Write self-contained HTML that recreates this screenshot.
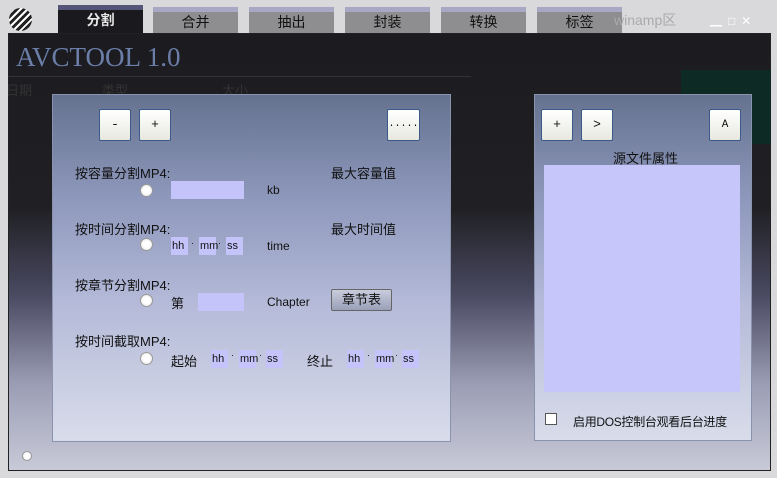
<!DOCTYPE html>
<html><head><meta charset="utf-8"><style>
*{margin:0;padding:0;box-sizing:border-box}
body{width:777px;height:478px;overflow:hidden;background:#d9d9dc;position:relative;font-family:"Liberation Sans","Noto Sans CJK SC",sans-serif;font-size:12px;color:#111}
.a{position:absolute}
.win{left:8px;top:33px;width:763px;height:438px;border:1px solid #222;background:linear-gradient(#1c1c20 0%,#202024 40%,#4a4a62 60%,#9a9cb4 80%,#c8cad8 100%)}
.tab{top:7px;width:85px;height:26px;background:#8e8e90;border-top:5px solid #a9a8c4;text-align:center;font-size:14px;line-height:20px;color:#111}
.tab.act{top:5px;height:28px;background:#1a1a1e;border-top:5px solid #55557a;color:#e8e8e8;font-weight:bold}
.panel{border:1px solid #8a93ad}
.btn{width:32px;height:32px;background:linear-gradient(#fff,#e8e8e0);border:1px solid #3a5a88;border-radius:2px;text-align:center;line-height:30px;font-family:"Liberation Mono",monospace;font-size:13px}
.inp{background:#c4c4fa;line-height:18px;font-size:11px;padding-left:1px}
.rad{width:13px;height:13px;border-radius:50%;background:radial-gradient(#fff 40%,#ddd);border:1px solid #999}
.lbl{font-size:13px}
.faint{font-size:13px}
</style></head><body>
<div class="a" style="left:9px;top:8px;width:23px;height:23px;border-radius:50%;background:repeating-linear-gradient(135deg,#222 0 3px,#fff 3px 5px)"></div>
<div class="a tab act" style="left:58px">分割</div>
<div class="a tab" style="left:153px">合并</div>
<div class="a tab" style="left:249px">抽出</div>
<div class="a tab" style="left:345px">封装</div>
<div class="a tab" style="left:441px">转换</div>
<div class="a tab" style="left:537px">标签</div>
<div class="a" style="left:614px;top:10px;font-size:14px;color:#aaa">winamp区</div>
<div class="a" style="left:710px;top:12px;color:#fff;font-size:12px;letter-spacing:6px">▁□✕</div>
<div class="a win"></div>
<div class="a" style="left:16px;top:42px;font-family:'Liberation Serif',serif;font-size:27px;color:#6a7ea8">AVCTOOL 1.0</div>
<div class="a" style="left:8px;top:76px;width:463px;height:1px;background:#333"></div>
<div class="a faint" style="left:6px;top:80px;color:#333">日期</div>
<div class="a faint" style="left:102px;top:80px;color:#333">类型</div>
<div class="a faint" style="left:222px;top:80px;color:#333">大小</div>
<div class="a" style="left:681px;top:70px;width:90px;height:74px;background:#0e2a24"></div>
<!-- left panel -->
<div class="a panel" style="left:52px;top:94px;width:399px;height:348px;background:linear-gradient(#65728f,#8e98bc 30%,#b4bad8 60%,#d8dcea 100%)"></div>
<div class="a btn" style="left:99px;top:109px">-</div>
<div class="a btn" style="left:139px;top:109px">+</div>
<div class="a btn" style="left:387px;top:109px;width:33px;font-size:10px">.....</div>
<div class="a lbl" style="left:75px;top:163px">按容量分割MP4:</div>
<div class="a lbl" style="left:331px;top:163px">最大容量值</div>
<div class="a rad" style="left:140px;top:184px"></div>
<div class="a inp" style="left:171px;top:181px;width:73px;height:18px"></div>
<div class="a" style="left:267px;top:183px">kb</div>
<div class="a lbl" style="left:75px;top:219px">按时间分割MP4:</div>
<div class="a lbl" style="left:331px;top:219px">最大时间值</div>
<div class="a rad" style="left:140px;top:238px"></div>
<div class="a inp" style="left:171px;top:237px;width:17px;height:18px">hh</div>
<div class="a" style="left:191px;top:238px;font-size:9px">·</div>
<div class="a inp" style="left:199px;top:237px;width:17px;height:18px">mm</div>
<div class="a" style="left:218px;top:238px;font-size:9px">·</div>
<div class="a inp" style="left:226px;top:237px;width:17px;height:18px">ss</div>
<div class="a" style="left:267px;top:239px">time</div>
<div class="a lbl" style="left:75px;top:275px">按章节分割MP4:</div>
<div class="a rad" style="left:140px;top:294px"></div>
<div class="a lbl" style="left:171px;top:293px">第</div>
<div class="a inp" style="left:198px;top:293px;width:46px;height:18px"></div>
<div class="a" style="left:267px;top:295px">Chapter</div>
<div class="a" style="left:331px;top:289px;width:61px;height:22px;border:1px solid #666;border-radius:2px;background:linear-gradient(#c8ccdc,#9aa0b8);text-align:center;line-height:20px;font-size:13px">章节表</div>
<div class="a lbl" style="left:75px;top:331px">按时间截取MP4:</div>
<div class="a rad" style="left:140px;top:352px"></div>
<div class="a lbl" style="left:171px;top:351px">起始</div>
<div class="a inp" style="left:211px;top:350px;width:17px;height:18px">hh</div>
<div class="a" style="left:231px;top:350px;font-size:9px">·</div>
<div class="a inp" style="left:239px;top:350px;width:17px;height:18px">mm</div>
<div class="a" style="left:259px;top:350px;font-size:9px">·</div>
<div class="a inp" style="left:266px;top:350px;width:17px;height:18px">ss</div>
<div class="a lbl" style="left:307px;top:351px">终止</div>
<div class="a inp" style="left:347px;top:350px;width:17px;height:18px">hh</div>
<div class="a" style="left:367px;top:350px;font-size:9px">·</div>
<div class="a inp" style="left:375px;top:350px;width:17px;height:18px">mm</div>
<div class="a" style="left:395px;top:350px;font-size:9px">·</div>
<div class="a inp" style="left:402px;top:350px;width:17px;height:18px">ss</div>
<div class="a rad" style="left:22px;top:451px;width:10px;height:10px"></div>
<!-- right panel -->
<div class="a panel" style="left:534px;top:94px;width:218px;height:347px;background:linear-gradient(#65728f,#8e98bc 30%,#b4bad8 60%,#d8dcea 100%)"></div>
<div class="a btn" style="left:541px;top:109px">+</div>
<div class="a btn" style="left:581px;top:109px">&gt;</div>
<div class="a btn" style="left:709px;top:109px;font-size:11px">A</div>
<div class="a lbl" style="left:613px;top:148px">源文件属性</div>
<div class="a" style="left:544px;top:165px;width:196px;height:227px;background:#c6c6fa"></div>
<div class="a" style="left:545px;top:413px;width:12px;height:12px;background:#fff;border:1px solid #555"></div>
<div class="a" style="left:573px;top:413px;font-size:12px;letter-spacing:-0.3px">启用DOS控制台观看后台进度</div>
</body></html>
